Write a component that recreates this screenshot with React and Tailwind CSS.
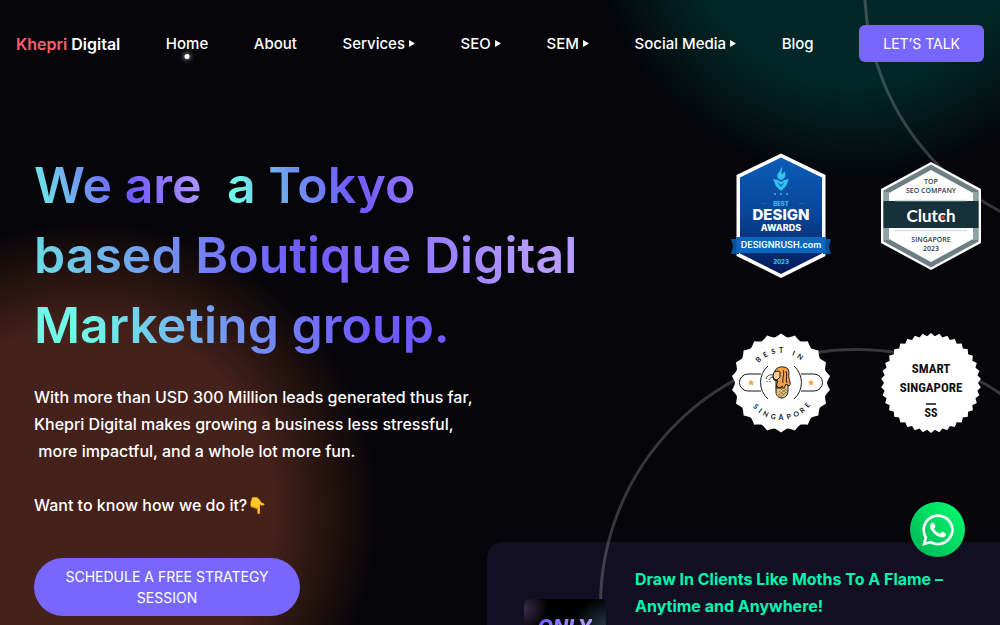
import React from 'react';
import { FaWhatsapp } from 'react-icons/fa';

const NAV_ITEMS = [
  { label: 'Home', active: true },
  { label: 'About' },
  { label: 'Services', submenu: true },
  { label: 'SEO', submenu: true },
  { label: 'SEM', submenu: true },
  { label: 'Social Media', submenu: true },
  { label: 'Blog' },
];

// Outline of a round seal: the radius swings between inner and outer
const sealPoints = (teeth, inner, outer, steps) => {
  const total = teeth * steps;
  return Array.from({ length: total }, (_, i) => {
    const angle = (i / total) * Math.PI * 2 - Math.PI / 2;
    const phase = Math.abs(((i % steps) / steps) * 2 - 1);
    const r = inner + (outer - inner) * phase ** 1.4;
    return `${(50 + r * Math.cos(angle)).toFixed(2)},${(50 + r * Math.sin(angle)).toFixed(2)}`;
  }).join(' ');
};

const BEST_IN = [['B', -44], ['E', -29], ['S', -14], ['T', 0], ['I', 23], ['N', 36]];
const SINGAPORE = [['S', 47], ['I', 37], ['N', 26], ['G', 13], ['A', 0], ['P', -13], ['O', -26], ['R', -38], ['E', -50]];

const DesignRushBadge = () => (
  <svg viewBox="0 0 100 126" className="w-full" role="img" aria-label="DesignRush Best Design Awards 2023">
    <defs>
      <linearGradient id="rush" x1="0" y1="0" x2="0" y2="1">
        <stop offset="0" stopColor="#0a5cb8" />
        <stop offset="0.5" stopColor="#0a4596" />
        <stop offset="1" stopColor="#05195a" />
      </linearGradient>
    </defs>
    <polygon points="50,0.5 94.5,22 94.5,103 50,125 5.5,103 5.5,22" fill="#fff" />
    <polygon points="50,4.5 91,24.5 91,100.5 50,121 9,100.5 9,24.5" fill="url(#rush)" />
    <path d="M0 86h8v15H0l2-7.500z" fill="#07529d" />
    <path d="M100 86h-8v15h8l-2-7.500z" fill="#07529d" />
    <rect x="5.500" y="84" width="89" height="16" fill="#0b66bd" />
    <path d="M50 14c3 2-1 5 1 7 2-1 2-2 2-3 3 4 1 8-3 9-4-1-5-5-2-8 1-1 2-3 2-5z" fill="#31c3f2" />
    <path d="M42 26l5 1 3 2 3-2 5-1-3 7-5 5-5-5z" fill="#31c3f2" />
    <path d="M46 29l4 3 4-3-4 5z" fill="#0a55ad" />
    <g fill="#31c3f2">
      <circle cx="44" cy="41" r="1" />
      <circle cx="50" cy="41" r="1" />
      <circle cx="56" cy="41" r="1" />
    </g>
    <path d="M30 50.500h5M68 50.500h5" stroke="#2a76bd" strokeWidth="0.600" />
    <g textAnchor="middle" fontFamily="Inter, sans-serif" fill="#fff">
      <text x="50" y="53" fontSize="6" fontWeight="800" fill="#31c3f2">BEST</text>
      <text x="50" y="67" fontSize="15" fontWeight="800">DESIGN</text>
      <text x="50" y="78" fontSize="9" fontWeight="800">AWARDS</text>
      <text x="50" y="95" fontSize="9" fontWeight="600">DESIGNRUSH.com</text>
      <text x="50" y="111" fontSize="6" fontWeight="800" fill="#31c3f2">2023</text>
    </g>
  </svg>
);

const ClutchBadge = () => (
  <svg viewBox="0 0 100 108" className="w-full" role="img" aria-label="Clutch Top SEO Company Singapore 2023">
    <polygon points="50,0 100,27 100,81 50,108 0,81 0,27" fill="#fff" />
    <polygon points="50,2.500 97.500,28.500 97.500,79.500 50,105.500 2.500,79.500 2.500,28.500" fill="#6d7f84" />
    <path d="M2.500 30h6v48h-6zM91.500 30h6v48h-6z" fill="#93a1a4" />
    <polygon points="50,8 92,31 92,77 50,100 8,77 8,31" fill="#fff" />
    <rect x="2.500" y="39" width="95" height="27" fill="#17313b" />
    <path d="M14 38.500h72M14 68.500h72" stroke="#d9dee0" strokeWidth="1.500" />
    <g textAnchor="middle" fontFamily="'Open Sans', sans-serif" fontSize="7" fontWeight="600" fill="#2c424b">
      <text x="50" y="22">TOP</text>
      <text x="50" y="31">SEO COMPANY</text>
      <text x="50" y="80">SINGAPORE</text>
      <text x="50" y="89">2023</text>
    </g>
    <text x="50" y="60" textAnchor="middle" fontFamily="Lato, sans-serif" fontSize="17" fontWeight="700" fill="#fff">Clutch</text>
    <circle cx="62" cy="55.500" r="1.800" fill="#ef3a2d" />
  </svg>
);

const BestInSingaporeBadge = () => (
  <svg viewBox="0 0 100 100" className="w-full" role="img" aria-label="Best in Singapore">
    <polygon points={sealPoints(22, 46, 49.5, 8)} fill="#fff" strokeLinejoin="round" />
    <g fill="none" stroke="#16181c" strokeWidth="1">
      <path d="M30 41H17a8.500 8.500 0 0 0 0 17h13M70 41h13a8.500 8.500 0 0 1 0 17H70" />
      <path d="M37 33a22 22 0 0 0 0 33M63 33a22 22 0 0 1 0 33" />
    </g>
    <path d="M20 46.500l1 2 2.200.2-1.600 1.500.5 2.300-2.100-1.200-2.100 1.200.5-2.300-1.600-1.500 2.200-.2z" fill="#f2a541" />
    <path d="M80 46.500l1 2 2.200.2-1.600 1.500.5 2.300-2.100-1.200-2.100 1.200.5-2.300-1.600-1.500 2.200-.2z" fill="#f2a541" />
    <path d="M43 42c-5-1-7 1-8 4M43 44c-3 0-4 1-5 3M36 48v1M39 48v1" fill="none" stroke="#16181c" strokeWidth="0.800" />
    <g stroke="#16181c" strokeWidth="1" strokeLinejoin="round">
      <path d="M45 51v8c0 4 3 6 6 6s6-3 6-7V47H45z" fill="#e8c37f" />
      <path d="M44 38c1-4 9-6 13-2 2 3 0 6 1 9 1 4 2 7 0 8l-3-2-2 4-8 0 1-5 1-2-4-1-1-3z" fill="#f2a541" />
      <path d="M43 39l4-1 2 1v5l-3 3-3-1-1-3z" fill="#f8d08c" />
      <path d="M52 37c2 4-1 8 0 13M55 38c2 4-1 7 1 12M45 52l3 3 4-2" fill="none" />
    </g>
    <path d="M48 58l5 4M50 56l5 4M53 55l3 3M47 61l4 3M55 56l-7 6M56 59l-5 4" stroke="#16181c" strokeWidth="0.400" />
    <g textAnchor="middle" fontFamily="Lato, sans-serif" fontSize="7" fontWeight="700" fill="#16181c">
      {BEST_IN.map(([char, angle]) => (
        <text key={char} x="50" y="20" transform={`rotate(${angle} 50 50)`}>{char}</text>
      ))}
      {SINGAPORE.map(([char, angle]) => (
        <text key={char} x="50" y="87" transform={`rotate(${angle} 50 50)`}>{char}</text>
      ))}
    </g>
  </svg>
);

const SmartSingaporeBadge = () => (
  <svg viewBox="0 0 100 100" className="w-full" role="img" aria-label="Smart Singapore">
    <polygon points={sealPoints(38, 47, 50, 2)} fill="#fff" />
    <g textAnchor="middle" fontFamily="'Liberation Sans Narrow', 'Roboto Condensed', 'DejaVu Sans Condensed', sans-serif" fontWeight="700" fill="#111">
      <text x="50" y="40" fontSize="13">SMART</text>
      <text x="50" y="59" fontSize="13">SINGAPORE</text>
      <text x="50" y="84" fontSize="12">SS</text>
    </g>
    <path d="M45 71h10" stroke="#111" strokeWidth="1.500" />
  </svg>
);

const Header = () => (
  <header className="flex items-center justify-between px-4 pt-[25px]">
    <a href="#" className="text-base leading-5 font-semibold">
      <span className="text-[#ff5f6d]">Khepri</span> Digital
    </a>
    {NAV_ITEMS.map(({ label, active, submenu }) => (
      <a key={label} href="#" className="relative flex items-center gap-1 text-[15px] leading-5 font-medium">
        {label}
        {submenu && (
          <svg viewBox="0 0 5 6" className="h-[7px] w-1.5" fill="currentColor">
            <path d="M0 0l5 3-5 3z" />
          </svg>
        )}
        {active && (
          <span className="absolute top-full left-1/2 size-[5px] -translate-x-1/2 rounded-full bg-white shadow-[0_0_5px_#fff]" />
        )}
      </a>
    ))}
    <a href="#" className="relative z-10 rounded-md bg-[#7767ff] px-6 py-2 text-sm leading-[21px]">
      LET’S TALK
    </a>
  </header>
);

const App = () => (
  <div className="relative h-screen overflow-hidden bg-[#05050a] font-['Inter',sans-serif] text-white">
    {/* Background glows */}
    <div className="absolute -top-[350px] right-[-120px] size-[530px] bg-[radial-gradient(closest-side,#022726_62%,#03191a_80%,transparent)]" />
    <div className="absolute top-[220px] -left-[200px] size-[580px] bg-[radial-gradient(closest-side,#44211b_64%,#25130f_82%,transparent)]" />

    <div className="relative">
      <Header />

      <main>
        <section className="flex items-start justify-between pr-[19px] pl-[34px]">
          <div className="pt-[88px]">
            <h1 className="text-[50px] leading-[70px] font-semibold">
              <span className="bg-[linear-gradient(75deg,#6ff7e8,#7194f0_32%,#7059ff_55%,#b79cff)] bg-clip-text text-transparent">We are</span>
              &nbsp;{' '}
              <span className="bg-[linear-gradient(75deg,#6ff7e8_8%,#6f96ef_36%,#7059ff_66%,#9a7aff)] bg-clip-text text-transparent">a Tokyo</span>
              <br />
              <span className="bg-[linear-gradient(75deg,#6be0e6,#7489f0_28%,#7059ff_50%,#b79cff_92%)] bg-clip-text text-transparent">based Boutique Digital</span>
              <br />
              <span className="bg-[linear-gradient(75deg,#6ff7e8_14%,#759bf0_45%,#7059ff_80%)] bg-clip-text text-transparent">Marketing group.</span>
            </h1>
            <p className="pt-6 text-base leading-[27px] font-medium">
              With more than USD 300 Million leads generated thus far,
              <br />
              Khepri Digital makes growing a business less stressful,
              <br />
              &nbsp;more impactful, and a whole lot more fun.
              <br />
              <br />
              Want to know how we do it?👇
            </p>
          </div>

          <div className="relative z-10 grid grid-cols-[100px_100px] items-center gap-x-[50px] gap-y-[54px] pt-[91px]">
            <DesignRushBadge />
            <ClutchBadge />
            <BestInSingaporeBadge />
            <SmartSingaporeBadge />
          </div>
        </section>

        <section className="grid grid-cols-[487fr_513fr] pt-[23px]">
          <div className="pt-4 pl-[34px]">
            <a href="#" className="block w-[266px] rounded-full bg-[#7767ff] px-6 py-2 text-center text-sm leading-[21px]">
              SCHEDULE A FREE STRATEGY SESSION
            </a>
          </div>
          <article className="flex gap-[29px] rounded-tl-2xl bg-[#130f22] pt-6 pb-12 pl-[37px]">
            <div className="relative z-10 mt-[33px] h-28 w-[82px] shrink-0 rounded-md bg-black bg-[radial-gradient(circle_at_0_10px,#3a2a4d,transparent_24px),radial-gradient(circle_at_100%_34px,#2c4054,transparent_36px)] pt-3.5 text-center text-xl font-extrabold italic">
              <span className="bg-linear-to-r from-[#7059ff] to-[#b79cff] bg-clip-text text-transparent">ONLY</span>
            </div>
            <h2 className="text-base leading-[27px] font-bold text-[#00f5b0]">
              Draw In Clients Like Moths To A Flame –
              <br />
              Anytime and Anywhere!
            </h2>
          </article>
        </section>
      </main>
    </div>

    {/* Decorative rings */}
    <div className="pointer-events-none absolute -top-[272px] -right-[378px] size-[515px] rounded-full border-3 border-white/20" />
    <div className="pointer-events-none absolute top-[348px] -right-[114px] size-[515px] rounded-full border-3 border-white/20" />

    <a
      href="#"
      aria-label="Chat on WhatsApp"
      className="fixed right-[35px] bottom-[68px] z-20 flex size-[55px] items-center justify-center rounded-full bg-linear-to-tr from-[#00b355] to-[#00ff70]"
    >
      <FaWhatsapp className="size-9" />
    </a>
  </div>
);

export default App;
